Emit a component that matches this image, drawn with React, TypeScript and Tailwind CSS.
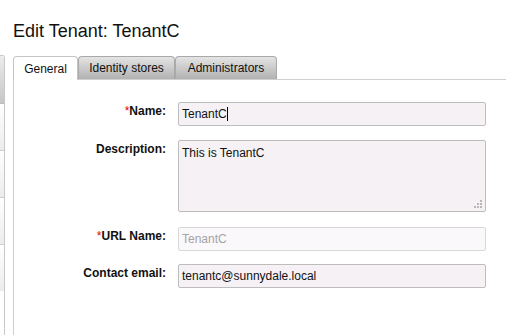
import React from "react";

const Label = ({ children, req }: { children: React.ReactNode; req?: boolean }) => (
  <div className="w-[152px] shrink-0 text-right pt-[2px] text-[12px] leading-[14px] font-bold text-[#111]">
    {req && <span className="text-[#e00000] font-normal">*</span>}
    {children}
  </div>
);

export default function App() {
  return (
    <div className="w-[506px] h-[335px] bg-white flex overflow-hidden font-['Liberation_Sans',Arial,sans-serif] text-black">
      {/* sidebar sliver */}
      <div className="w-[5px] shrink-0 mt-[55px] border-r border-t border-[#c8c8c8] rounded-tr-[3px] flex flex-col">
        <div className="h-[48px] bg-gradient-to-b from-[#ececec] to-[#c6c6c6] border-b border-[#bdbdbd]" />
        <div className="h-[47px] bg-gradient-to-b from-white to-[#eeebee] border-b border-[#cfcfcf]" />
        <div className="h-[47px] bg-gradient-to-b from-white to-[#eeebee] border-b border-[#cfcfcf]" />
        <div className="h-[47px] bg-gradient-to-b from-white to-[#eeebee] border-b border-[#cfcfcf]" />
        <div className="h-[46px] bg-gradient-to-b from-white to-[#eeebee]" />
      </div>

      <div className="ml-[8px] flex-1 flex flex-col">
        <h1 className="mt-[21px] text-[18px] leading-[20px] text-[#111]">Edit Tenant: TenantC</h1>

        {/* tabs */}
        <div className="mt-[16px] flex items-end border-b border-[#cfcfcf] h-[23px]">
          <div className="w-[65px] h-[24px] -mb-px bg-white border border-b-0 border-[#c4c4c4] rounded-t-[4px] flex items-center justify-center text-[12px] text-[#111]">
            General
          </div>
          <div className="w-[97px] h-[23px] bg-gradient-to-b from-[#e4e4e4] to-[#b2b2b2] border border-b-0 border-[#a9a9a9] rounded-t-[4px] flex items-center justify-center text-[12px] text-[#111]">
            Identity stores
          </div>
          <div className="w-[102px] h-[23px] bg-gradient-to-b from-[#e4e4e4] to-[#b2b2b2] border border-b-0 border-[#a9a9a9] rounded-t-[4px] flex items-center justify-center text-[12px] text-[#111]">
            Administrators
          </div>
        </div>

        {/* panel */}
        <div className="flex-1 border-l border-[#cfcfcf] pt-[22px] flex flex-col">
          <div className="flex gap-[12px]">
            <Label req>Name:</Label>
            <div className="w-[308px] h-[24px] bg-[#f5f1f5] border border-[#bdbdbd] rounded-[2px] pl-[3px] flex items-center text-[12px] text-[#111]">
              TenantC
              <span className="inline-block w-px h-[14px] bg-black" />
            </div>
          </div>

          <div className="flex gap-[12px] mt-[14px]">
            <Label>Description:</Label>
            <div className="relative w-[308px] h-[72px] bg-[#f5f1f5] border border-[#bdbdbd] rounded-[2px] pl-[3px] pt-[5px] text-[12px] leading-[14px] text-[#111]">
              This is TenantC
              <svg className="absolute right-[2px] bottom-[2px]" width="10" height="10" viewBox="0 0 10 10">
                <rect x="7" y="1" width="2" height="2" fill="#b8b8b8" />
                <rect x="4" y="4" width="2" height="2" fill="#b8b8b8" />
                <rect x="7" y="4" width="2" height="2" fill="#b8b8b8" />
                <rect x="1" y="7" width="2" height="2" fill="#b8b8b8" />
                <rect x="4" y="7" width="2" height="2" fill="#b8b8b8" />
                <rect x="7" y="7" width="2" height="2" fill="#b8b8b8" />
              </svg>
            </div>
          </div>

          <div className="flex gap-[12px] mt-[15px]">
            <Label req>URL Name:</Label>
            <div className="w-[308px] h-[24px] bg-[#fbf8fb] border border-[#d8d8d8] rounded-[2px] pl-[3px] flex items-center text-[12px] text-[#a3a3a3]">
              TenantC
            </div>
          </div>

          <div className="flex gap-[12px] mt-[13px]">
            <Label>Contact email:</Label>
            <div className="w-[308px] h-[24px] bg-[#f5f1f5] border border-[#bdbdbd] rounded-[2px] pl-[3px] flex items-center text-[12px] text-[#111]">
              tenantc@sunnydale.local
            </div>
          </div>
        </div>
      </div>
    </div>
  );
}
